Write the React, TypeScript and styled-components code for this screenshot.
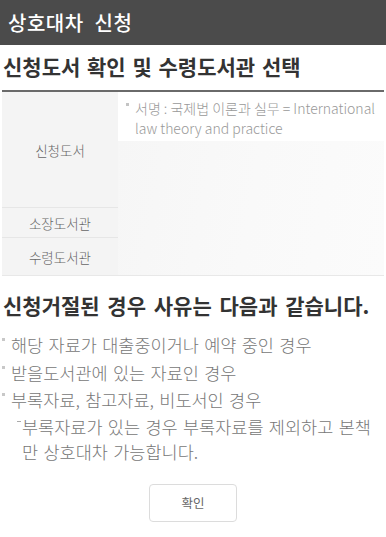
import styled, { createGlobalStyle } from "styled-components";

const GlobalStyle = createGlobalStyle`
  html, body {
    margin: 0;
    padding: 0;
    background: #fff;
  }
  body {
    font-family: "Noto Sans CJK KR", "Noto Sans", sans-serif;
    -webkit-font-smoothing: antialiased;
  }
`

const TopBar = styled.header`
  height: 45px;
  background: #4b4b4b;
  color: #fff;
  display: flex;
  align-items: center;
  padding: 0 8px;
  font-size: 20px;
  font-weight: 500;
  letter-spacing: 0.5px;
  word-spacing: 6px;
`

const Content = styled.main`
  padding: 0 2px;
`

const PageTitle = styled.h2`
  margin: 0;
  padding: 7px 1px 0;
  height: 38px;
  line-height: 28px;
  font-size: 21px;
  font-weight: 700;
  word-spacing: 2px;
  color: #333;
  border-bottom: 2px solid #6a6a6a;
`

const InfoTable = styled.div`
  display: grid;
  grid-template-columns: 116px 1fr;
  grid-template-rows: 116px 30px 37px;
  border-bottom: 1px solid #e8e8e8;
`

const Label = styled.div<{ $last?: boolean }>`
  grid-column: 1;
  background: #f4f4f4;
  display: flex;
  align-items: center;
  justify-content: center;
  font-size: 13.5px;
  font-weight: 300;
  color: #666;
  border-bottom: ${p => (p.$last ? "none" : "1px solid #e6e6e6")};
`

const ValueColumn = styled.div`
  grid-column: 2;
  grid-row: 1 / 4;
  display: flex;
  flex-direction: column;
`

const BookTitle = styled.div`
  background: #fff;
  padding: 6px 8px 3px 17px;
  font-size: 14px;
  font-weight: 300;
  line-height: 20px;
  color: #999;
  position: relative;

  &::before {
    content: "";
    position: absolute;
    left: 8px;
    top: 11px;
    width: 3px;
    height: 3px;
    background: #c4c4c4;
  }
`

const Filler = styled.div`
  flex: 1;
  background: linear-gradient(100deg, #f6f6f6 0%, #f9f9f9 50%, #fbfbfb 100%);
`

const NoticeTitle = styled.h3`
  margin: 15px 0 12px;
  padding-left: 1px;
  font-size: 21px;
  line-height: 28px;
  font-weight: 700;
  word-spacing: 3px;
  color: #333;
`

const ReasonList = styled.ul`
  list-style: none;
  margin: 0;
  padding: 0;
`

const Reason = styled.li`
  position: relative;
  padding-left: 9px;
  font-size: 17.5px;
  font-weight: 300;
  line-height: 27.5px;
  word-spacing: 1.5px;
  color: #777;

  &::before {
    content: "";
    position: absolute;
    left: 0;
    top: 7px;
    width: 3px;
    height: 3px;
    background: #c8c8c8;
  }
`

const SubList = styled.ul`
  list-style: none;
  margin: 0;
  padding: 0;
`

const SubReason = styled.li`
  position: relative;
  padding-left: 11px;
  padding-right: 8px;
  line-height: 25px;

  &::before {
    content: "";
    position: absolute;
    left: 6px;
    top: 7px;
    width: 4px;
    height: 1px;
    background: #aaa;
  }
`

const Actions = styled.div`
  display: flex;
  justify-content: center;
  padding-top: 20px;
`

const ConfirmButton = styled.button`
  width: 88px;
  height: 38px;
  border: 1px solid #dcdcdc;
  border-radius: 4px;
  background: #fff;
  font-family: inherit;
  font-size: 12.5px;
  color: #666;
`

export default function App() {
  return (
    <>
      <GlobalStyle />
      <TopBar>상호대차 신청</TopBar>
      <Content>
        <PageTitle>신청도서 확인 및 수령도서관 선택</PageTitle>
        <InfoTable>
          <Label>신청도서</Label>
          <Label>소장도서관</Label>
          <Label $last>수령도서관</Label>
          <ValueColumn>
            <BookTitle>서명 : 국제법 이론과 실무 = International law theory and practice</BookTitle>
            <Filler />
          </ValueColumn>
        </InfoTable>

        <NoticeTitle>신청거절된 경우 사유는 다음과 같습니다.</NoticeTitle>
        <ReasonList>
          <Reason>해당 자료가 대출중이거나 예약 중인 경우</Reason>
          <Reason>받을도서관에 있는 자료인 경우</Reason>
          <Reason>
            부록자료, 참고자료, 비도서인 경우
            <SubList>
              <SubReason>부록자료가 있는 경우 부록자료를 제외하고 본책만 상호대차 가능합니다.</SubReason>
            </SubList>
          </Reason>
        </ReasonList>

        <Actions>
          <ConfirmButton>확인</ConfirmButton>
        </Actions>
      </Content>
    </>
  )
}
